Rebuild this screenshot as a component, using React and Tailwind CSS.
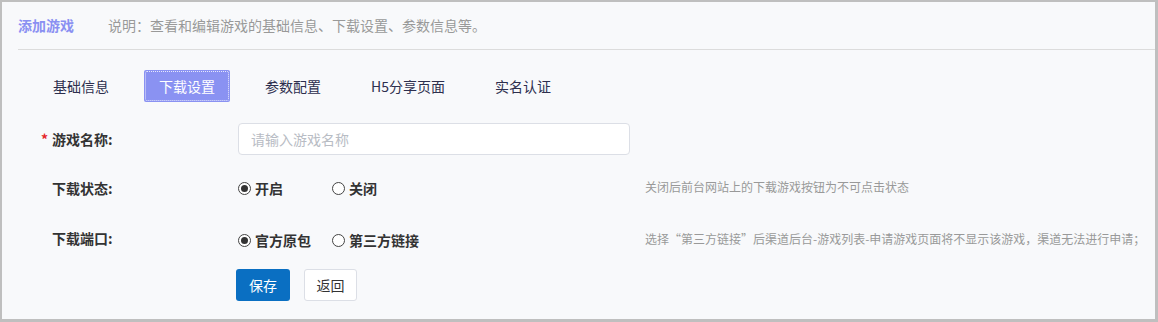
export default function App() {
  const font = { fontFamily: '"Noto Sans CJK SC", "Noto Sans", sans-serif' };
  const tabs = ["基础信息", "下载设置", "参数配置", "H5分享页面", "实名认证"];
  const Radio = ({ checked, label, wide }) => (
    <label className={`flex items-center ${wide ? "w-[94px]" : ""}`}>
      <span className="w-[13px] h-[13px] rounded-full border border-[#444] bg-white flex items-center justify-center">
        {checked && <span className="w-[7px] h-[7px] rounded-full bg-[#333]" />}
      </span>
      <span className="ml-[4px] text-[14px] font-bold text-[#333]">{label}</span>
    </label>
  );
  return (
    <div className="w-[1158px] h-[322px] bg-[#bfbfbf] pt-[2px] pl-[2px] pr-[3px] pb-[3px]" style={font}>
      <div className="h-full bg-[#f8f9fb] overflow-hidden">
        <div className="ml-[16px] h-[48px] border-b border-[#dcdcdc] flex items-center">
          <span className="text-[14px] font-bold text-[#8a90f2]">添加游戏</span>
          <span className="ml-[34px] text-[14px] text-[#999]">说明：查看和编辑游戏的基础信息、下载设置、参数信息等。</span>
        </div>
        <div className="mt-[20px] ml-[36px] flex gap-[20px]">
          {tabs.map((t, i) => (
            <div
              key={t}
              className={`h-[32px] px-[15px] flex items-center text-[14px] rounded-[2px] ${
                i === 1 ? "bg-[#8a92f2] text-white relative" : "text-[#2d2f4e]"
              }`}
            >
              {i === 1 && <span className="absolute inset-[1px] border border-dotted border-white/80 rounded-[2px]" />}
              {t}
            </div>
          ))}
        </div>
        <div className="mt-[21px] ml-[39px]">
          <div className="flex items-center h-[32px]">
            <div className="w-[197px] text-[14px] font-bold text-[#333] flex items-center">
              <span className="text-[#e5262a] w-[11px]">*</span>
              <span>游戏名称:</span>
            </div>
            <div className="w-[392px] h-[32px] border border-[#dcdfe6] rounded-[4px] bg-white flex items-center pl-[12px] text-[14px] text-[#b8bcc4]">
              请输入游戏名称
            </div>
          </div>
          <div className="flex items-center h-[32px] mt-[17px]">
            <div className="w-[197px] pl-[11px] text-[14px] font-bold text-[#333]">下载状态:</div>
            <div className="w-[407px] flex items-center">
              <Radio checked label="开启" wide />
              <Radio label="关闭" />
            </div>
            <div className="text-[12px] text-[#999] -mt-[3px]">关闭后前台网站上的下载游戏按钮为不可点击状态</div>
          </div>
          <div className="flex items-center h-[32px] mt-[20px]">
            <div className="w-[197px] pl-[11px] text-[14px] font-bold text-[#333] -mt-[4px]">下载端口:</div>
            <div className="w-[407px] flex items-center">
              <Radio checked label="官方原包" wide />
              <Radio label="第三方链接" />
            </div>
            <div className="text-[12px] text-[#999] -mt-[3px]">选择“第三方链接”后渠道后台-游戏列表-申请游戏页面将不显示该游戏，渠道无法进行申请；</div>
          </div>
          <div className="flex items-center h-[32px] mt-[13px] ml-[195px]">
            <button className="w-[54px] h-[32px] rounded-[3px] bg-[#0a6fc2] text-white text-[14px]">保存</button>
            <button className="ml-[14px] w-[53px] h-[32px] rounded-[3px] bg-white border border-[#dcdfe6] text-[#333] text-[14px]">返回</button>
          </div>
        </div>
      </div>
    </div>
  );
}
